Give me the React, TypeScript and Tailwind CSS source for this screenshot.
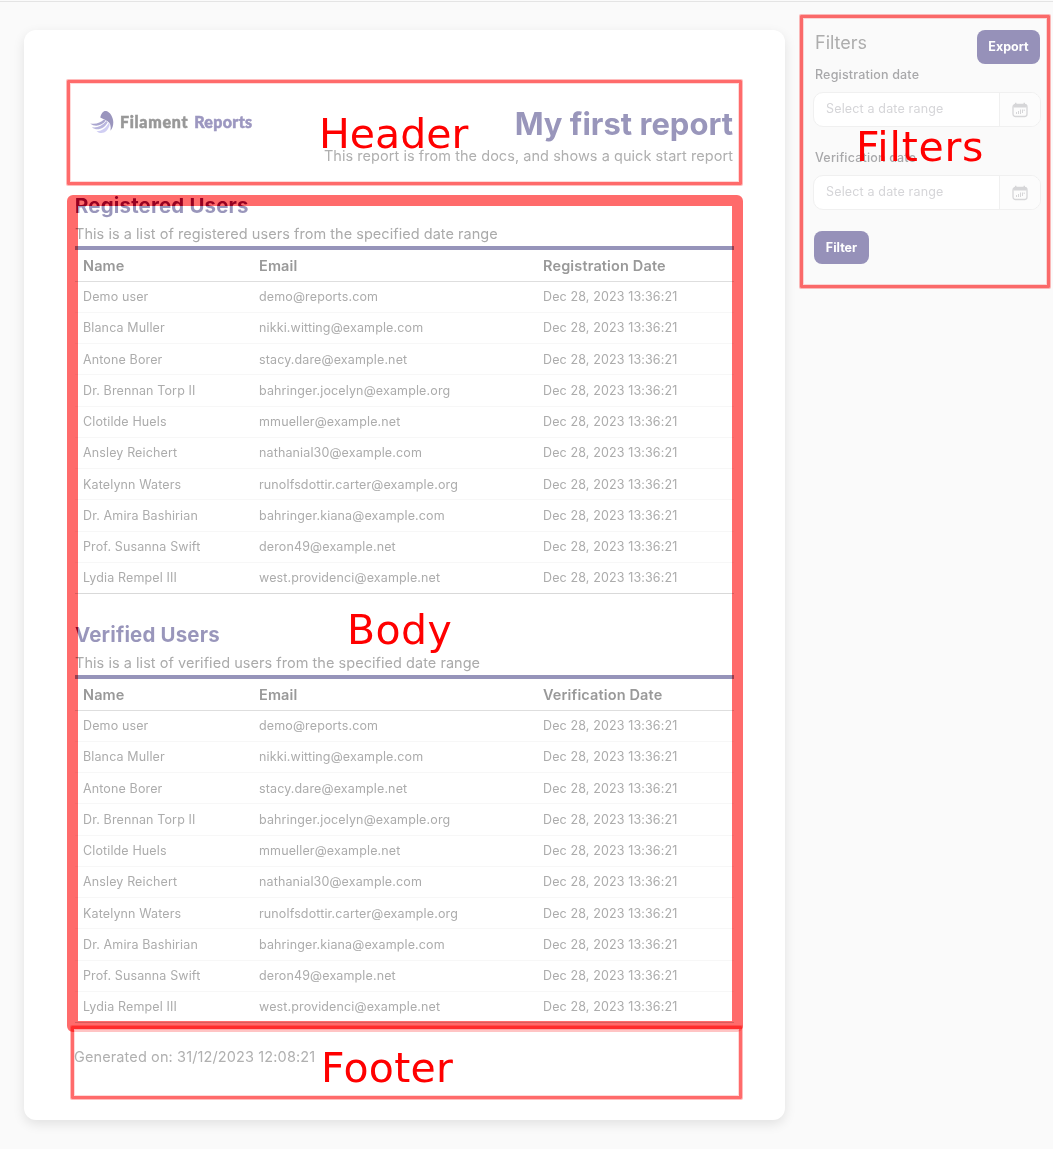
const people = [
  ["Demo user", "demo@reports.com"],
  ["Blanca Muller", "nikki.witting@example.com"],
  ["Antone Borer", "stacy.dare@example.net"],
  ["Dr. Brennan Torp II", "bahringer.jocelyn@example.org"],
  ["Clotilde Huels", "mmueller@example.net"],
  ["Ansley Reichert", "nathanial30@example.com"],
  ["Katelynn Waters", "runolfsdottir.carter@example.org"],
  ["Dr. Amira Bashirian", "bahringer.kiana@example.com"],
  ["Prof. Susanna Swift", "deron49@example.net"],
  ["Lydia Rempel III", "west.providenci@example.net"],
];

function Logo() {
  return (
    <div className="flex items-center">
      <svg width="24" height="24" viewBox="0 0 24 24" className="shrink-0">
        <path d="M10.300 7.500C11.200 3 13.500.5 16.200 1c3.800 1 7 6 7.100 11.300 0 3.600-1 6.200-2.800 8.500.7-4.600-.2-8-3-9.500C15.200 9.600 13 9 10.300 7.500Z" fill="#9a95bd" />
        <path d="M.3 13.500C6 14.600 10.500 12.800 14 9.600l1.700 1C12 15.700 5 17.500.3 13.500Z" fill="#aaa6cf" />
        <path d="M2 17.300c5.600.7 10.500-1.500 14.200-6.300l1.500 1.200C14.500 18.600 7 21.600 2 17.300Z" fill="#b9b6de" />
        <path d="M6.500 21.200c5 0 9.500-3 12.200-8.200l1 1.800c-1.600 7-7.700 10.700-13.200 6.400Z" fill="#d0cef3" />
      </svg>
      <div className="ml-[6px] flex gap-[6px] font-['Lato'] text-[16px] leading-6 font-black whitespace-nowrap">
        <span className="tracking-[0.7px] text-[#989898] [-webkit-text-stroke:0.5px_#989898]">Filament</span>
        <span className="tracking-[0.35px] text-[#9c97c0] [-webkit-text-stroke:0.5px_#9c97c0]">Reports</span>
      </div>
    </div>
  );
}

function Report({ title, kind, date, overlapped }: { title: string; kind: string; date: string; overlapped?: boolean }) {
  return (
    <section className="w-[660px]">
      <h2
        className={
          "h-[30px] text-[20.5px] leading-[30px] font-bold tracking-[0.15px] w-fit whitespace-nowrap bg-clip-text text-transparent " +
          (overlapped
            ? "bg-[linear-gradient(to_right,#96004c_3px,transparent_3px),linear-gradient(to_bottom,#96004c_15px,#9996bb_15px)]"
            : "bg-[linear-gradient(to_right,#96004c_3px,#9996bb_3px)]")
        }
      >
        {title}
      </h2>
      <p className="h-[25px] pt-[2px] text-[14.5px] leading-[22px] tracking-[0.04px] whitespace-nowrap text-[#ababab]">
        This is a list of {kind} users from the specified date range
      </p>
      <table className="w-[659px] table-fixed border-collapse text-left">
        <thead>
          <tr className="h-[33px] border-t-4 border-b border-t-[#9694ba] border-b-[#dedede] text-[14.5px] leading-5 tracking-[0.14px] text-[#999]">
            <th className="w-[176px] pt-[2px] pl-2 font-semibold">Name</th>
            <th className="w-[284px] pt-[2px] pl-2 font-semibold">Email</th>
            <th className="pt-[2px] pl-2 font-semibold">{date}</th>
          </tr>
        </thead>
        <tbody>
          {people.map(([name, email]) => (
            <tr key={name} className="h-[31.25px] border-b border-[#f7f7f7] text-[12.5px] leading-5 tracking-[0.13px] text-[#acacac] last:border-[#d9d9d9]">
              <td className="pt-px pl-2">{name}</td>
              <td className="pt-px pl-2">{email}</td>
              <td className="pt-px pl-2">Dec 28, 2023 13:36:21</td>
            </tr>
          ))}
        </tbody>
      </table>
    </section>
  );
}

function DateField({ label }: { label: string }) {
  return (
    <label className="flex flex-col gap-[7px]">
      <span className="text-[12.5px] leading-5 font-medium tracking-[0.18px] text-[#a8a8aa]">{label}</span>
      <span className="-ml-[2px] flex h-[35px] w-[228px] overflow-hidden rounded-[10px] border border-[#f0f0f0] bg-white">
        <span className="flex w-[186px] items-center border-r border-[#f0f0f0] pl-[12px] text-[12.5px] tracking-[0.16px] text-[#d5d5d8]">Select a date range</span>
        <span className="flex flex-1 items-center justify-center bg-[#fcfcfc]">
          <svg width="16" height="16" viewBox="0 0 16 16" fill="none" stroke="#d6d6d8">
            <rect x="1" y="2.500" width="14" height="12" rx="2.500" strokeWidth="1.300" />
            <path d="M1.500 4.200h13" strokeWidth="2.600" />
            <path d="M3.700.8v2M12.300.8v2" strokeWidth="1.500" />
            <path d="M4.500 10v2M6.500 9v3M8.500 7.500V12M10.500 7.500V11M12.200 7.500V9" strokeWidth="1" />
          </svg>
        </span>
      </span>
    </label>
  );
}

const label = "pointer-events-none absolute z-20 font-['DejaVu_Sans'] text-[41px] leading-[48px] whitespace-nowrap text-[#ff0000]";
const frame =
  "pointer-events-none absolute rounded-[1px] border-[3px] border-[#ff6b6b] shadow-[0_0_0_1px_#ffbdbd,inset_0_0_0_1px_#ffd9d9] mix-blend-multiply";

export default function App() {
  return (
    <div className="relative isolate h-[1149px] w-[1053px] overflow-hidden bg-[#fafafa] font-['Inter',sans-serif]">
      <div className="mt-px h-px bg-[#e4e4e4]" />
      <div className="flex items-start pt-[28px] pl-6">
        <main className="flex h-[1090px] w-[761px] flex-col rounded-xl bg-white pt-[72px] pl-[51px] shadow-[0_4px_12px_rgba(0,0,0,0.1)]">
          <header className="flex h-[88px] w-[658px] items-start justify-between pl-[15px]">
            <div className="pt-[8px]"><Logo /></div>
            <div className="pt-px text-right">
              <h1 className="text-[31px] leading-[42px] font-bold whitespace-nowrap text-[#9996bb]">My first report</h1>
              <p className="text-[14.5px] leading-[22px] tracking-[0.05px] whitespace-nowrap text-[#afafaf]">This report is from the docs, and shows a quick start report</p>
            </div>
          </header>
          <div className="flex flex-col gap-[26px] pt-[1px]">
            <Report title="Registered Users" kind="registered" date="Registration Date" overlapped />
            <Report title="Verified Users" kind="verified" date="Verification Date" />
          </div>
          <footer className="-ml-px pt-[22px] text-[14.5px] leading-6 tracking-[0.12px] text-[#b0b0b0]">Generated on: 31/12/2023 12:08:21</footer>
        </main>
        <aside className="ml-[30px] w-[225px]">
          <div className="flex h-[35px] items-start justify-between">
            <h3 className="text-[18px] leading-[25px] text-[#adadad]">Filters</h3>
            <button className="h-[34px] w-[63px] rounded-lg bg-[#9691b9] text-[12.5px] font-bold text-white">Export</button>
          </div>
          <div className="flex flex-col gap-[21px]">
            <DateField label="Registration date" />
            <DateField label="Verification date" />
          </div>
          <button className="-ml-px mt-[21px] h-[33px] w-[55px] rounded-lg bg-[#9691b9] pt-px text-[12.5px] font-bold text-white">Filter</button>
        </aside>
      </div>

      <div className={frame + " left-[67px] top-[80px] h-[105px] w-[675px]"} />
      <div className="pointer-events-none absolute top-[195px] left-[67px] h-[837px] w-[676px] rounded-[6px] border-[11px] border-[#ff6b6b] mix-blend-multiply" />
      <div className="pointer-events-none absolute top-[1029px] left-[74px] h-[5px] w-[669px] bg-white/60" />
      <div className={frame + " left-[71px] top-[1026px] h-[73px] w-[671px]"} />
      <div className={frame + " left-[800px] top-[15px] h-[273px] w-[250px]"} />
      <div className={label + " left-[319px] top-[110px]"}>Header</div>
      <div className={label + " left-[856px] top-[123px] tracking-[0.75px]"}>Filters</div>
      <div className={label + " left-[347px] top-[606px] tracking-[0.4px]"}>Body</div>
      <div className={label + " left-[321px] top-[1044px] tracking-[0.3px]"}>Footer</div>
    </div>
  );
}
